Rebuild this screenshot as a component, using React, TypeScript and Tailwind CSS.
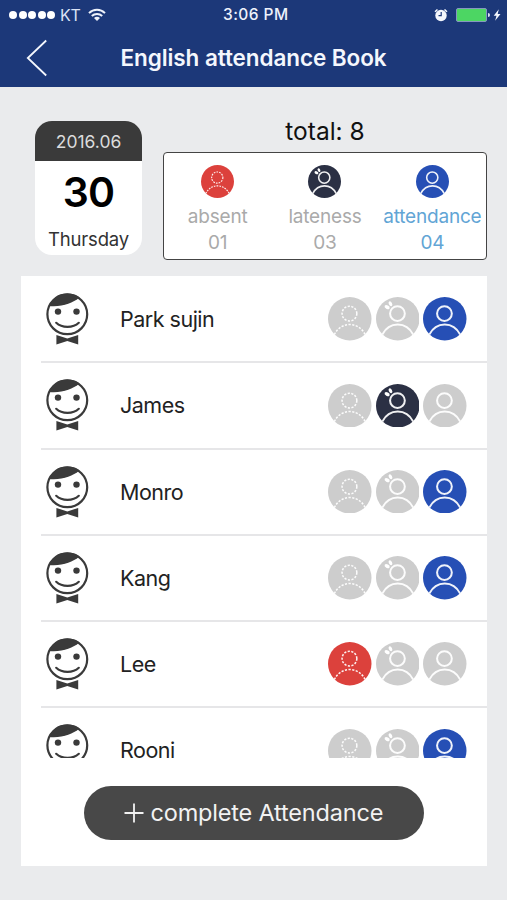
import clsx from "clsx";

type Status = "absent" | "lateness" | "attendance";

const statuses: Status[] = ["absent", "lateness", "attendance"];

const fills: Record<Status, string> = {
  absent: "fill-[#dc413c]",
  lateness: "fill-[#2b3044]",
  attendance: "fill-[#264fb5]",
};

const summary: { status: Status; count: string }[] = [
  { status: "absent", count: "01" },
  { status: "lateness", count: "03" },
  { status: "attendance", count: "04" },
];

const students: { name: string; status: Status }[] = [
  { name: "Park sujin", status: "attendance" },
  { name: "James", status: "lateness" },
  { name: "Monro", status: "attendance" },
  { name: "Kang", status: "attendance" },
  { name: "Lee", status: "absent" },
  { name: "Rooni", status: "attendance" },
];

function StatusIcon({ status, active, className }: { status: Status; active: boolean; className: string }) {
  const dash = status === "absent" ? "2.2 1.4" : undefined;
  const width = status === "absent" ? 1.5 : 2;
  return (
    <svg viewBox="0 0 43 43" className={clsx("shrink-0", className)}>
      <circle cx="21.5" cy="21.5" r="21.5" className={active ? fills[status] : "fill-[#cdcdcd]"} />
      <g fill="none" stroke="#fff" strokeOpacity="0.93" strokeWidth={width} strokeDasharray={dash}>
        <circle cx="21.2" cy="16.4" r="7.3" />
        <path d="M6.200 37.200C9.400 31 14.800 27.200 21.500 27.200s12.100 3.800 15.300 10" />
      </g>
      {status === "lateness" && (
        <g fill="#fff">
          <ellipse cx="14.300" cy="6.700" rx="1.600" ry="2.600" transform="rotate(-28 14.3 6.7)" />
          <ellipse cx="11" cy="10" rx="1.800" ry="2.700" transform="rotate(-62 11 10)" />
        </g>
      )}
    </svg>
  );
}

function Face() {
  return (
    <svg viewBox="0 0 44 54" className="h-[54px] w-11 shrink-0 fill-[#3a3a3a]">
      <circle cx="22.3" cy="22.3" r="19.9" fill="none" stroke="#3a3a3a" strokeWidth="2.200" />
      <path d="M4 14C7.500 5.800 14 1.400 22.300 1.400c4.600 0 8.800 1.400 12.200 4.100C27 11.500 17 15.200 4 14Z" />
      <circle cx="13" cy="19.600" r="3.200" />
      <circle cx="31.500" cy="19.600" r="3.200" />
      <path d="M11.200 30.800c5.800 5.500 16.800 5.500 22.600 0" fill="none" stroke="#3a3a3a" strokeWidth="2.200" strokeLinecap="round" />
      <path d="M11.400 42.900l10.900 3.500 10.900-3.500v9.500l-10.900-3.500-10.900 3.500Z" />
    </svg>
  );
}

function StatusBar() {
  return (
    <div className="flex h-[29px] items-center pr-1.5 pl-[9px]">
      <div className="flex w-[213px] items-center">
        <div className="flex gap-[1.5px]">
          {[0, 1, 2, 3, 4].map((el) => (
            <span key={el} className="size-2 rounded-full bg-white"></span>
          ))}
        </div>
        <span className="ml-[5px] w-[21px] text-base tracking-[-0.3px] text-[#dbe3f5]">KT</span>
        <svg viewBox="0 0 18 14" className="ml-[7px] h-3.5 w-[18px]" fill="none" stroke="#eef2fb" strokeWidth="2">
          <path d="M1 5.100C5.500.7 12.500.7 17 5.100M3.800 8C6.700 5.200 11.300 5.200 14.200 8" />
          <path d="M6 9.900C7.700 8.300 10.300 8.300 12 9.900L9 13Z" fill="#eef2fb" stroke="none" />
        </svg>
      </div>
      <span className="ml-px text-[15.5px] font-medium tracking-[0.45px] text-[#eef2fb]">3:06 PM</span>
      <div className="ml-auto flex items-center">
        <svg viewBox="0 0 14 14" className="size-3.5">
          <circle cx="7" cy="7.500" r="5.700" fill="#f4f7fd" />
          <path d="M1 3.800 3.500 1.500M13 3.800 10.500 1.500" stroke="#f4f7fd" strokeWidth="1.500" />
          <path d="M7.200 4v3.700H4.500" fill="none" stroke="#1c3879" strokeWidth="1.200" />
        </svg>
        <span className="ml-2 h-3.5 w-[31px] rounded-[2px] border border-[#8597c0] bg-[#4cd663]"></span>
        <span className="ml-px h-1 w-[2px] rounded-r-full bg-[#dbe3f5]"></span>
        <svg viewBox="0 0 8 12" className="ml-[3px] h-3 w-2">
          <path d="M5.800.3.700 6.800h2.800L2.100 11.700 7.500 5H4.700Z" fill="#f4f7fd" />
        </svg>
      </div>
    </div>
  );
}

export default function App() {
  return (
    <div className="flex h-[900px] w-[507px] flex-col overflow-hidden bg-[#eaebed] font-['Inter',sans-serif]">
      <header className="h-[87px] shrink-0 bg-[#1c3879]">
        <StatusBar />
        <div className="flex h-[57px] items-center">
          <svg viewBox="0 0 22 38" className="ml-[26px] h-[38px] w-[22px]" fill="none" stroke="#f4f7fd" strokeWidth="1.800">
            <path d="M20.200 1.500 1.800 19l18.400 17.500" />
          </svg>
          <h1 className="ml-[72.500px] text-[22.500px] font-semibold tracking-[-0.08px] whitespace-nowrap text-[#f4f7fd]">
            English attendance Book
          </h1>
        </div>
      </header>

      <section className="flex h-[189px] shrink-0 pl-[35px]">
        <div className="mt-[34px] flex h-[134px] w-[107px] flex-col overflow-hidden rounded-[17px] bg-white text-center">
          <div className="h-10 bg-[#3a3a3a] text-[17.500px] leading-[41px] text-[#dcdcdc]">2016.06</div>
          <div className="h-[60px] text-[41px] leading-[62px] font-semibold tracking-[-0.8px] text-black">30</div>
          <div className="text-[18.500px] leading-[37px] tracking-[-0.15px] text-[#333]">Thursday</div>
        </div>
        <div className="mt-[30px] ml-[21px] w-[324px]">
          <p className="h-[35px] text-center text-[24.500px] leading-[28px] text-[#111]">total: 8</p>
          <div className="grid h-[108px] grid-cols-3 rounded border-[1.5px] border-[#444] bg-white pt-3">
            {summary.map((el) => (
              <div
                key={el.status}
                className={clsx(
                  "flex flex-col items-center text-[19px] leading-[26px] tracking-[-0.2px]",
                  el.status === "attendance" ? "text-[#62a5d5]" : "text-[#aaa]",
                )}
              >
                <StatusIcon status={el.status} active className="mb-[6px] size-[33px]" />
                <span>{el.status}</span>
                <span>{el.count}</span>
              </div>
            ))}
          </div>
        </div>
      </section>

      <main className="ml-[21px] h-[590px] w-[466px] shrink-0 bg-white">
        <ul className="h-[482px] overflow-hidden pt-px">
          {students.map((student) => (
            <li key={student.name} className="ml-5 flex h-[86.250px] items-center border-b-2 border-[#e6e6e8] pr-[20.500px] pl-1">
              <Face />
              <span className="ml-[31px] text-[21.500px] tracking-[-0.5px] text-[#222]">{student.name}</span>
              <div className="ml-auto flex gap-1">
                {statuses.map((el) => (
                  <StatusIcon key={el} status={el} active={el === student.status} className="size-[43.500px]" />
                ))}
              </div>
            </li>
          ))}
        </ul>
        <button className="mt-[27.500px] ml-[63px] flex h-[54px] w-[340px] items-center rounded-full bg-[#484848] pl-[39.500px] text-[23.500px] tracking-[-0.18px] whitespace-nowrap text-[#f2f2f2]">
          <svg viewBox="0 0 20 20" className="mr-[7px] size-5" stroke="#f2f2f2" strokeWidth="1.800">
            <path d="M10 .5v19M.5 10h19" />
          </svg>
          complete Attendance
        </button>
      </main>
    </div>
  );
}
